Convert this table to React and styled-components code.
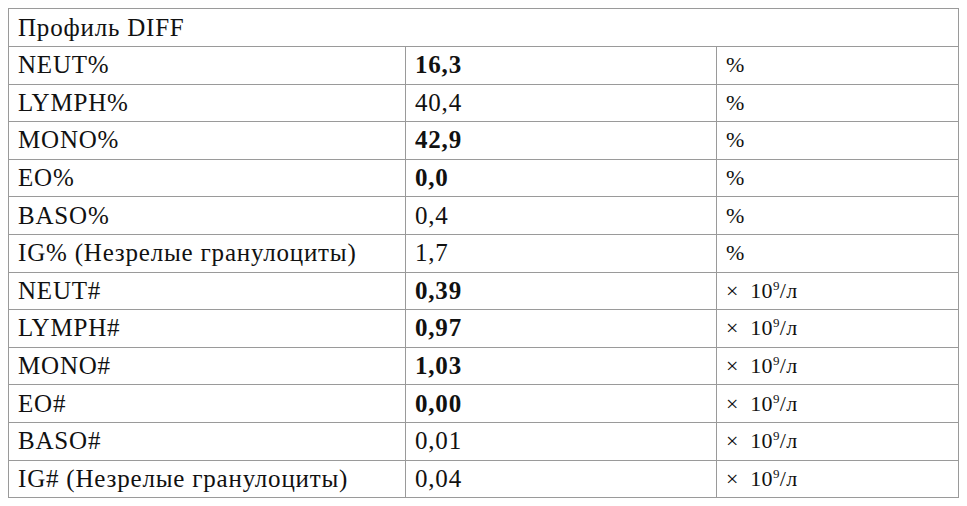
import React from 'react';
import styled, { createGlobalStyle } from 'styled-components';

const GlobalStyle = createGlobalStyle`
  body {
    margin: 0;
    background: #fff;
    font-family: "Liberation Serif", "DejaVu Serif", serif;
    color: #111;
  }
`;

const Page = styled.div`
  padding: 8px;
`;

const Table = styled.table`
  width: 950px;
  border-collapse: collapse;
  table-layout: fixed;
  border: 1px solid #8a8a8a;
`;

const Cell = styled.td`
  border: 1px solid #9a9a9a;
  height: 36.6px;
  padding: 0 9px;
  font-size: ${(p) => (p.$unit ? '22px' : '25px')};
  letter-spacing: ${(p) => (p.$unit ? '0.3px' : '0.8px')};
  font-weight: ${(p) => (p.$bold ? 700 : 400)};
  white-space: nowrap;
  vertical-align: middle;
`;

const Title = styled(Cell)`
  height: 37px;
`;

const Sup = styled.sup`
  font-size: 13px;
  vertical-align: 8px;
  line-height: 0;
`;

const rows = [
  ['NEUT%', '16,3', true, '%'],
  ['LYMPH%', '40,4', false, '%'],
  ['MONO%', '42,9', true, '%'],
  ['EO%', '0,0', true, '%'],
  ['BASO%', '0,4', false, '%'],
  ['IG% (Незрелые гранулоциты)', '1,7', false, '%'],
  ['NEUT#', '0,39', true, 'x'],
  ['LYMPH#', '0,97', true, 'x'],
  ['MONO#', '1,03', true, 'x'],
  ['EO#', '0,00', true, 'x'],
  ['BASO#', '0,01', false, 'x'],
  ['IG# (Незрелые гранулоциты)', '0,04', false, 'x'],
];

const Unit = ({ kind }) =>
  kind === '%' ? (
    '%'
  ) : (
    <>
      ×&nbsp; 10<Sup>9</Sup>/л
    </>
  );

export default function App() {
  return (
    <>
      <GlobalStyle />
      <Page>
        <Table>
          <colgroup>
            <col style={{ width: 397 }} />
            <col style={{ width: 311 }} />
            <col style={{ width: 242 }} />
          </colgroup>
          <tbody>
            <tr>
              <Title colSpan={3}>Профиль DIFF</Title>
            </tr>
            {rows.map(([name, value, bold, unit]) => (
              <tr key={name}>
                <Cell>{name}</Cell>
                <Cell $bold={bold}>{value}</Cell>
                <Cell $unit>
                  <Unit kind={unit} />
                </Cell>
              </tr>
            ))}
          </tbody>
        </Table>
      </Page>
    </>
  );
}
